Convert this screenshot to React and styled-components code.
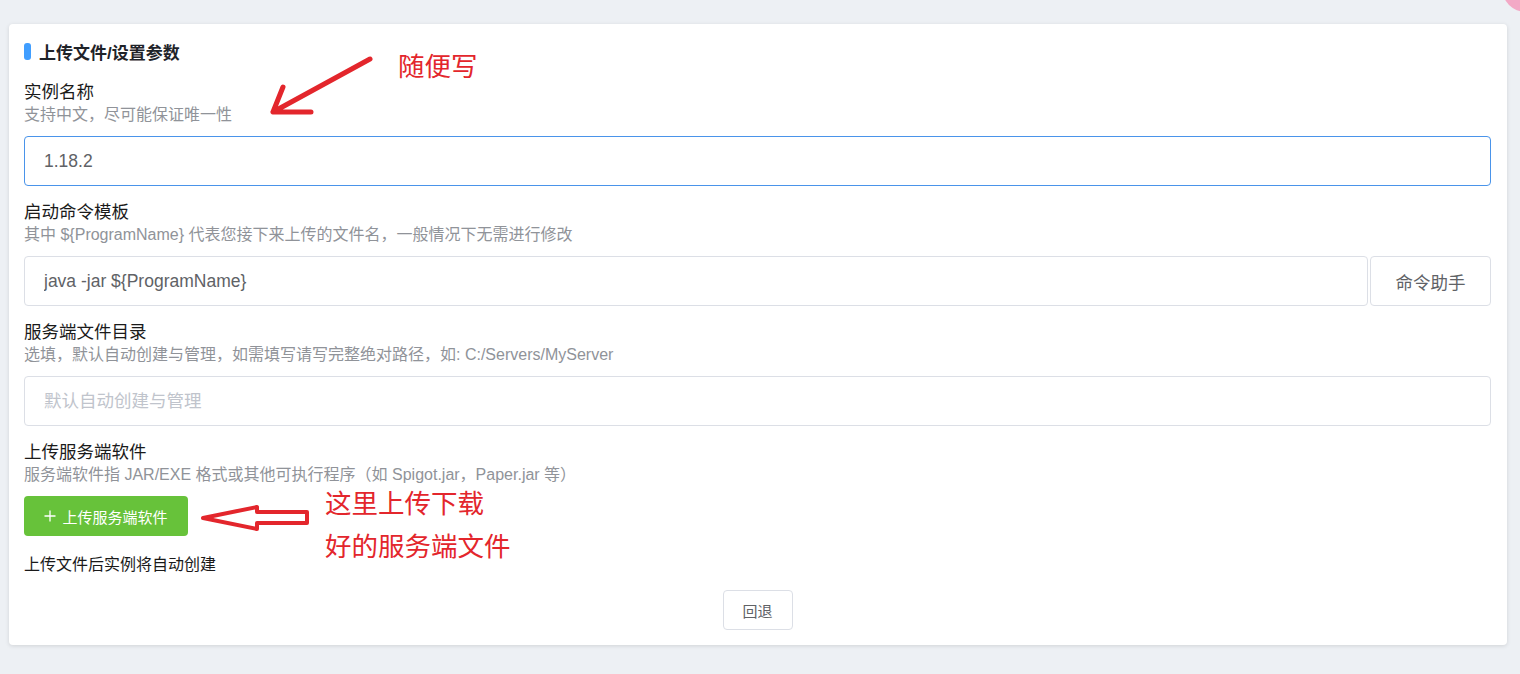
import React from "react";
import styled, { createGlobalStyle } from "styled-components";

const GlobalStyle = createGlobalStyle`
  html, body {
    margin: 0;
    padding: 0;
    background-color: #edf0f4;
    font-family: "Liberation Sans", "Noto Sans CJK SC", sans-serif;
  }
  * {
    box-sizing: border-box;
  }
`;

// Layout
const Page = styled.div`
  min-height: 674px;
  padding: 24px 13px 0 9px;
`;

const Card = styled.div`
  position: relative;
  display: flex;
  flex-direction: column;
  background-color: #ffffff;
  border-radius: 4px;
  box-shadow: 0 1px 4px rgba(0, 0, 0, 0.12);
  padding: 15px 16px 15px 15px;
`;

const Title = styled.div`
  display: flex;
  align-items: center;
  gap: 8px;
  height: 24px;
  font-size: 17px;
  font-weight: 700;
  color: #1f2329;
`;

const TitleBar = styled.span`
  width: 7px;
  height: 17px;
  border-radius: 3px;
  background-color: #409eff;
`;

const Field = styled.div`
  display: flex;
  flex-direction: column;
  margin-top: ${(p) => (p.$first ? "17px" : "14px")};
`;

const Label = styled.div`
  font-size: 17.5px;
  line-height: 24px;
  color: #1a1a1a;
`;

const Desc = styled.div`
  font-size: 16px;
  line-height: 22px;
  color: #909399;
`;

const InputRow = styled.div`
  display: flex;
  gap: 2px;
  margin-top: 10px;
`;

const Input = styled.input`
  flex: 1;
  height: 50px;
  padding: 0 19px;
  border: 1px solid ${(p) => (p.$active ? "#4a94ea" : "#dcdfe6")};
  border-radius: 4px;
  font-family: inherit;
  font-size: 17.5px;
  color: #606266;
  background-color: #ffffff;
  outline: none;

  &::placeholder {
    color: #c0c4cc;
  }
`;

const SideButton = styled.button`
  width: 121px;
  height: 50px;
  border: 1px solid #dcdfe6;
  border-radius: 4px;
  background-color: #ffffff;
  font-family: inherit;
  font-size: 17.5px;
  color: #606266;
  cursor: pointer;
`;

const UploadButton = styled.button`
  display: flex;
  align-items: center;
  justify-content: center;
  gap: 6px;
  width: 164px;
  height: 40px;
  margin-top: 10px;
  border: none;
  border-radius: 4px;
  background-color: #67c23a;
  font-family: inherit;
  font-size: 15px;
  color: #ffffff;
  cursor: pointer;
`;

const Info = styled.div`
  margin-top: 18px;
  font-size: 16px;
  line-height: 22px;
  color: #1a1a1a;
`;

const BackButton = styled.button`
  align-self: center;
  width: 70px;
  height: 40px;
  margin-top: 14px;
  border: 1px solid #dcdfe6;
  border-radius: 4px;
  background-color: #ffffff;
  font-family: inherit;
  font-size: 15px;
  color: #606266;
  cursor: pointer;
`;

// Red annotations drawn over the form
const Note = styled.div`
  position: absolute;
  left: ${(p) => p.$x}px;
  top: ${(p) => p.$y}px;
  font-family: "Noto Sans CJK SC", sans-serif;
  font-size: 26.5px;
  line-height: 43px;
  color: #e3262c;
  white-space: nowrap;
  pointer-events: none;
`;

const Overlay = styled.svg`
  position: absolute;
  left: 0;
  top: 0;
  width: 100%;
  height: 100%;
  pointer-events: none;
`;

const Blob = styled.div`
  position: fixed;
  top: -36px;
  right: -30px;
  width: 48px;
  height: 48px;
  border-radius: 50%;
  background-color: #f3a9c6;
`;

const PlusIcon = () => (
  <svg width="12" height="12" viewBox="0 0 12 12">
    <path d="M6 0.5V11.5M0.5 6H11.5" stroke="#fff" strokeWidth="1.3" />
  </svg>
);

export default function App() {
  return (
    <Page>
      <GlobalStyle />
      <Blob />
      <Card>
        <Title>
          <TitleBar />
          上传文件/设置参数
        </Title>

        <Field $first>
          <Label>实例名称</Label>
          <Desc>支持中文，尽可能保证唯一性</Desc>
          <InputRow>
            <Input $active defaultValue="1.18.2" />
          </InputRow>
        </Field>

        <Field>
          <Label>启动命令模板</Label>
          <Desc>其中 ${"{ProgramName}"} 代表您接下来上传的文件名，一般情况下无需进行修改</Desc>
          <InputRow>
            <Input defaultValue="java -jar ${ProgramName}" />
            <SideButton>命令助手</SideButton>
          </InputRow>
        </Field>

        <Field>
          <Label>服务端文件目录</Label>
          <Desc>选填，默认自动创建与管理，如需填写请写完整绝对路径，如: C:/Servers/MyServer</Desc>
          <InputRow>
            <Input placeholder="默认自动创建与管理" />
          </InputRow>
        </Field>

        <Field>
          <Label>上传服务端软件</Label>
          <Desc>服务端软件指 JAR/EXE 格式或其他可执行程序（如 Spigot.jar，Paper.jar 等）</Desc>
          <UploadButton>
            <PlusIcon />
            上传服务端软件
          </UploadButton>
        </Field>

        <Info>上传文件后实例将自动创建</Info>
        <BackButton>回退</BackButton>

        <Note $x={389} $y={19}>随便写</Note>
        <Note $x={316} $y={456}>
          这里上传下载
          <br />
          好的服务端文件
        </Note>

        <Overlay>
          <g stroke="#e3262c" strokeWidth="5" strokeLinecap="round" strokeLinejoin="round" fill="none">
            <path d="M361 35 L264 88 M274 63 L264 88 L302 88" />
          </g>
          <polygon
            points="194,494 248,483 248,488 298,488 298,499 248,499 248,505"
            stroke="#e3262c"
            strokeWidth="4"
            strokeLinejoin="round"
            fill="#ffffff"
          />
        </Overlay>
      </Card>
    </Page>
  );
}
